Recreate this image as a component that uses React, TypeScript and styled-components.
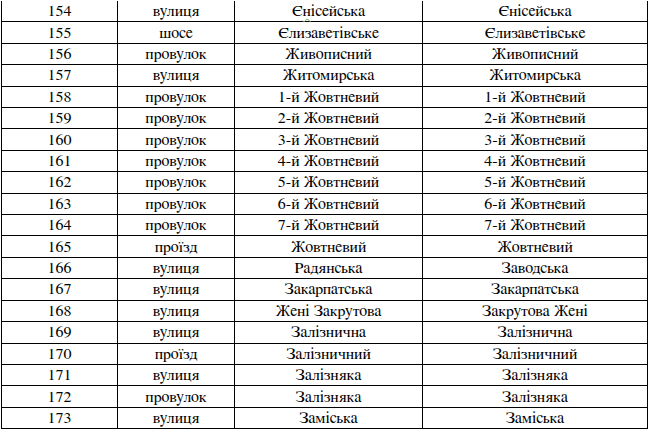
import { type FC } from "react";
import styled, { createGlobalStyle, ThemeProvider } from "styled-components";

const theme = {
  font: 'FreeSerif, "Liberation Serif", "Times New Roman", serif',
  line: "#000000",
  text: "#000000",
  spell: "#6fa84a",
};

const GlobalStyle = createGlobalStyle`
  html, body {
    margin: 0;
    padding: 0;
    background: #ffffff;
  }
`;

type Street = {
  no: number;
  kind: string;
  oldName: string;
  newName: string;
};

const streets: Street[] = [
  { no: 154, kind: "вулиця", oldName: "Єнісейська", newName: "Єнісейська" },
  { no: 155, kind: "шосе", oldName: "Єлизаветівське", newName: "Єлизаветівське" },
  { no: 156, kind: "провулок", oldName: "Живописний", newName: "Живописний" },
  { no: 157, kind: "вулиця", oldName: "Житомирська", newName: "Житомирська" },
  { no: 158, kind: "провулок", oldName: "1-й Жовтневий", newName: "1-й Жовтневий" },
  { no: 159, kind: "провулок", oldName: "2-й Жовтневий", newName: "2-й Жовтневий" },
  { no: 160, kind: "провулок", oldName: "3-й Жовтневий", newName: "3-й Жовтневий" },
  { no: 161, kind: "провулок", oldName: "4-й Жовтневий", newName: "4-й Жовтневий" },
  { no: 162, kind: "провулок", oldName: "5-й Жовтневий", newName: "5-й Жовтневий" },
  { no: 163, kind: "провулок", oldName: "6-й Жовтневий", newName: "6-й Жовтневий" },
  { no: 164, kind: "провулок", oldName: "7-й Жовтневий", newName: "7-й Жовтневий" },
  { no: 165, kind: "проїзд", oldName: "Жовтневий", newName: "Жовтневий" },
  { no: 166, kind: "вулиця", oldName: "Радянська", newName: "Заводська" },
  { no: 167, kind: "вулиця", oldName: "Закарпатська", newName: "Закарпатська" },
  { no: 168, kind: "вулиця", oldName: "Жені Закрутова", newName: "Закрутова Жені" },
  { no: 169, kind: "вулиця", oldName: "Залізнична", newName: "Залізнична" },
  { no: 170, kind: "проїзд", oldName: "Залізничний", newName: "Залізничний" },
  { no: 171, kind: "вулиця", oldName: "Залізняка", newName: "Залізняка" },
  { no: 172, kind: "провулок", oldName: "Залізняка", newName: "Залізняка" },
  { no: 173, kind: "вулиця", oldName: "Заміська", newName: "Заміська" },
];

const Sheet = styled.div`
  padding: 1px 0 0 1px;
`;

const Grid = styled.div`
  display: grid;
  grid-template-columns: 116px 117px 188px 225px;
  grid-auto-rows: 21.42px;
  width: 646px;
  border-left: 1px solid ${({ theme }) => theme.line};
`;

const Cell = styled.div`
  display: flex;
  align-items: center;
  justify-content: center;
  box-sizing: border-box;
  border-right: 1px solid ${({ theme }) => theme.line};
  border-bottom: 1px solid ${({ theme }) => theme.line};
  font-family: ${({ theme }) => theme.font};
  font-size: 16px;
  line-height: 18px;
  color: ${({ theme }) => theme.text};
  white-space: nowrap;
`;

const Squiggle = styled.span`
  text-decoration: underline wavy ${({ theme }) => theme.spell};
  text-decoration-thickness: 1px;
  text-underline-offset: 2px;
`;

// the spell checker flags the letter after the first one
const renderName = (name: string, flagged: boolean) =>
  flagged ? (
    <span>
      {name.slice(0, 1)}
      <Squiggle>{name.slice(1, 2)}</Squiggle>
      {name.slice(2)}
    </span>
  ) : (
    name
  );

const App: FC = () => {
  return (
    <ThemeProvider theme={theme}>
      <GlobalStyle />
      <Sheet>
        <Grid>
          {streets.map((s, index) => [
            <Cell key={`${s.no}-no`}>{s.no}</Cell>,
            <Cell key={`${s.no}-kind`}>{s.kind}</Cell>,
            <Cell key={`${s.no}-old`}>{renderName(s.oldName, index === 0)}</Cell>,
            <Cell key={`${s.no}-new`}>{renderName(s.newName, false)}</Cell>,
          ])}
        </Grid>
      </Sheet>
    </ThemeProvider>
  );
};

export default App;
